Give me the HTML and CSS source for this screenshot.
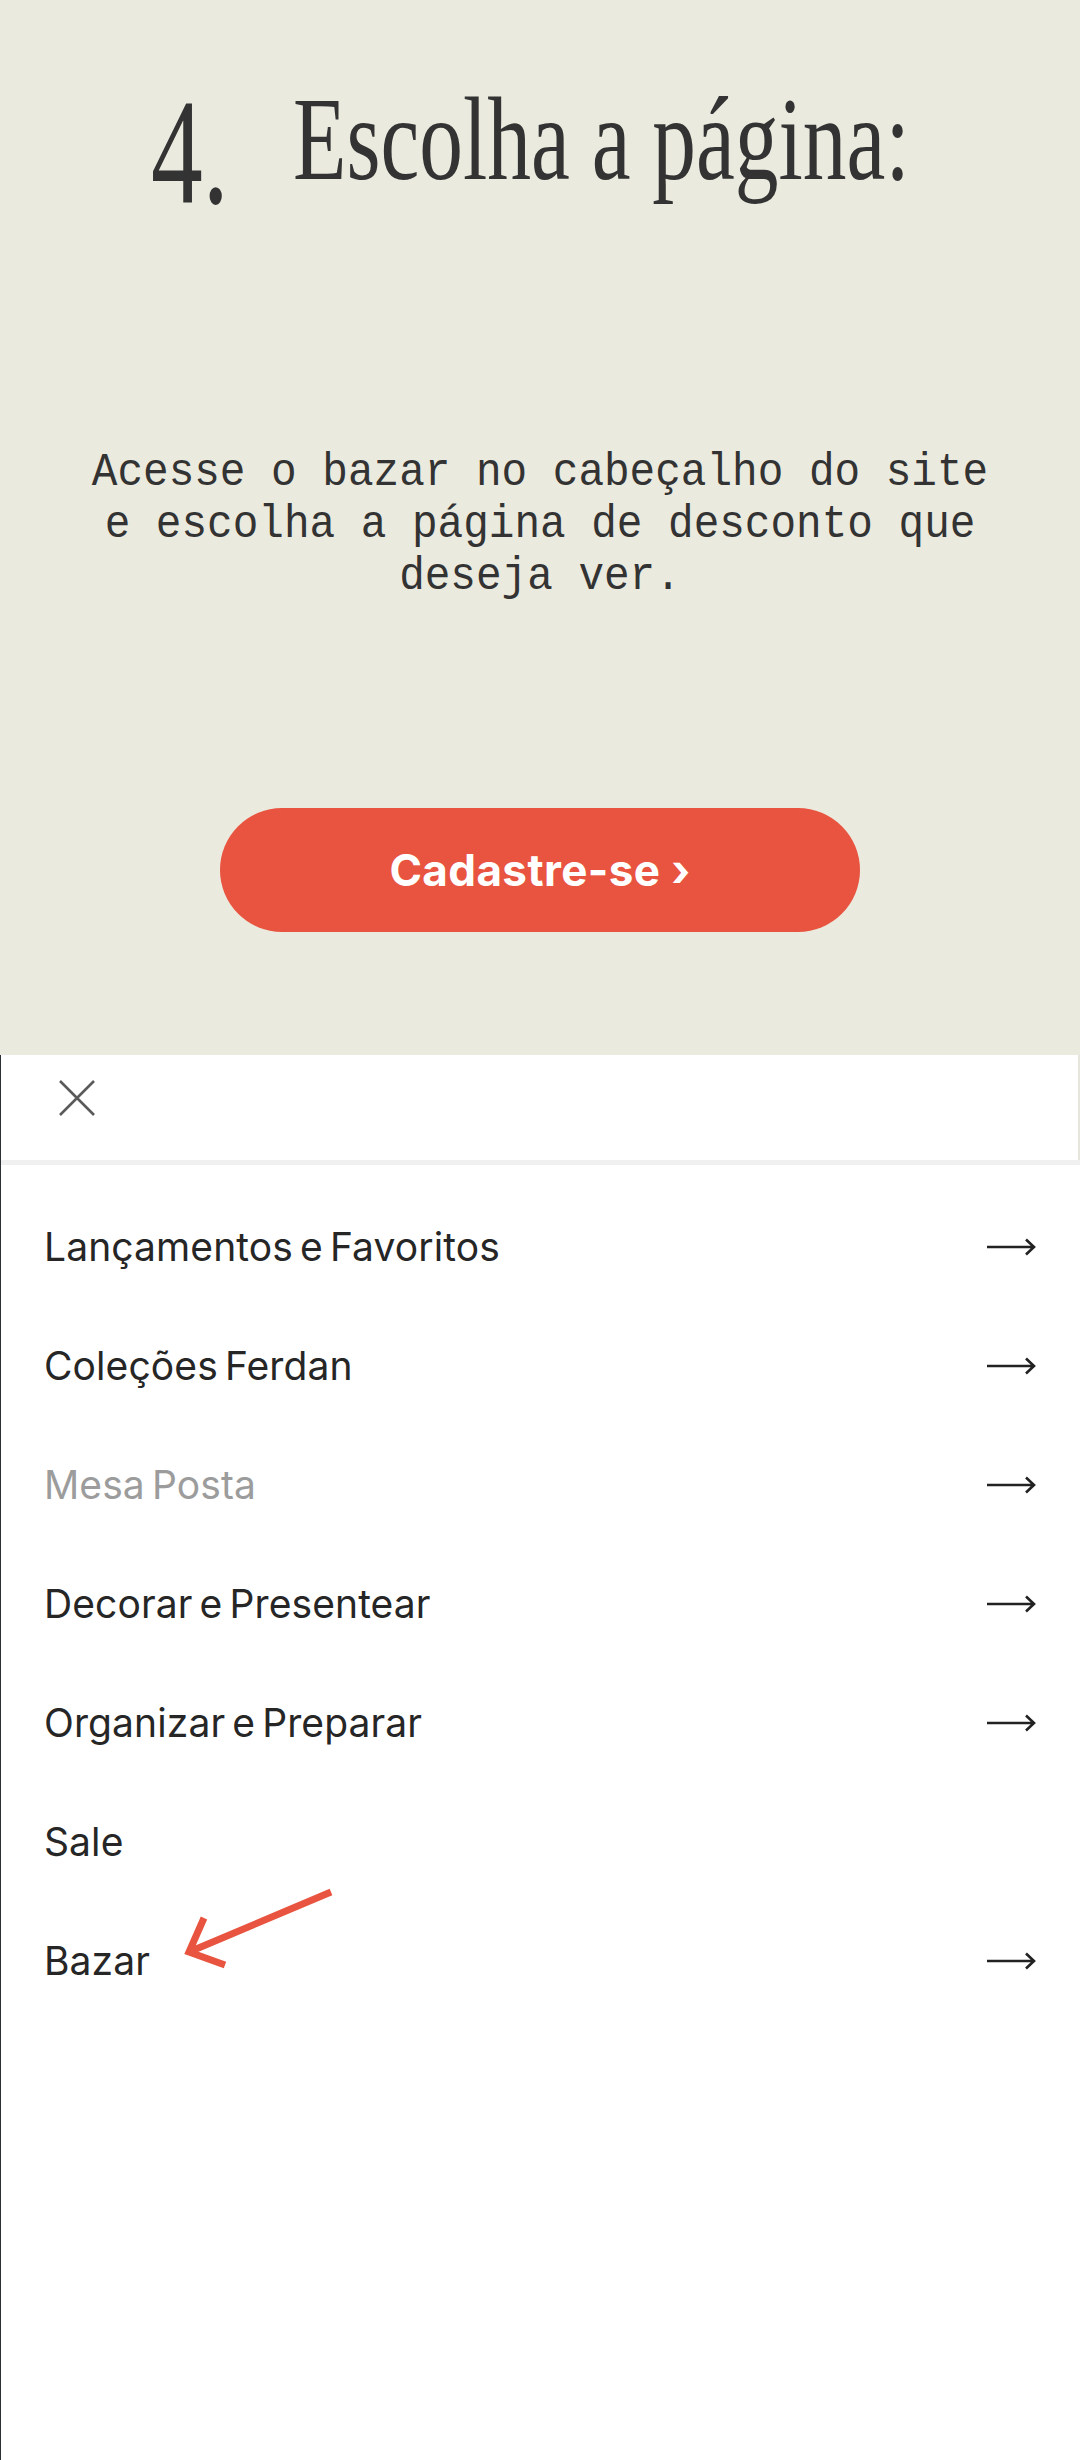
FILE: index.html
```html
<!DOCTYPE html>
<html lang="pt-BR">
<head>
<meta charset="utf-8">
<title>Escolha a página</title>
<link rel="stylesheet" href="styles.css">
</head>
<body>
<section class="step">
  <div class="step-head">
    <span class="step-num"><span class="step-num-in">4.</span></span>
    <h1 class="step-title"><span class="step-title-in">Escolha a página:</span></h1>
  </div>
  <p class="step-text">Acesse o bazar no cabeçalho do site<br>e escolha a página de desconto que<br>deseja ver.</p>
  <a class="cta" href="#">Cadastre-se ›</a>
</section>
<section class="menu">
  <div class="menu-head">
    <svg class="close" width="38" height="38" viewBox="0 0 38 38"><path d="M2 2 L36 36 M36 2 L2 36" stroke="#5a5a5a" stroke-width="2.6" fill="none"/></svg>
  </div>
  <ul class="menu-list">
    <li class="menu-item"><span>Lançamentos e Favoritos</span><svg class="go" width="50" height="20" viewBox="0 0 50 20"><path d="M1 10 H48 M40 2.5 L48 10 L40 17.5" stroke="#222" stroke-width="2.6" fill="none"/></svg></li>
    <li class="menu-item"><span>Coleções Ferdan</span><svg class="go" width="50" height="20" viewBox="0 0 50 20"><path d="M1 10 H48 M40 2.5 L48 10 L40 17.5" stroke="#222" stroke-width="2.6" fill="none"/></svg></li>
    <li class="menu-item menu-item--muted"><span>Mesa Posta</span><svg class="go" width="50" height="20" viewBox="0 0 50 20"><path d="M1 10 H48 M40 2.5 L48 10 L40 17.5" stroke="#222" stroke-width="2.6" fill="none"/></svg></li>
    <li class="menu-item"><span>Decorar e Presentear</span><svg class="go" width="50" height="20" viewBox="0 0 50 20"><path d="M1 10 H48 M40 2.5 L48 10 L40 17.5" stroke="#222" stroke-width="2.6" fill="none"/></svg></li>
    <li class="menu-item"><span>Organizar e Preparar</span><svg class="go" width="50" height="20" viewBox="0 0 50 20"><path d="M1 10 H48 M40 2.5 L48 10 L40 17.5" stroke="#222" stroke-width="2.6" fill="none"/></svg></li>
    <li class="menu-item"><span>Sale</span></li>
    <li class="menu-item"><span>Bazar</span><svg class="go" width="50" height="20" viewBox="0 0 50 20"><path d="M1 10 H48 M40 2.5 L48 10 L40 17.5" stroke="#222" stroke-width="2.6" fill="none"/></svg></li>
  </ul>
  <svg class="pointer" width="160" height="90" viewBox="0 0 160 90"><path d="M150 4 L8 64 M23 30 L8 64 L44 77" stroke="#e8543f" stroke-width="7" fill="none" stroke-linejoin="miter"/></svg>
</section>
</body>
</html>
```
FILE: styles.css
```css
* { box-sizing: border-box; }
html, body { margin: 0; padding: 0; }
body { width: 1080px; min-height: 2460px; background: #fff; }

.step {
  background: #ebeadf;
  height: 1055px;
  padding-top: 77px;
  display: flex;
  flex-direction: column;
  align-items: center;
  color: #333;
}
.step-head {
  width: 100%;
  display: flex;
  align-items: flex-start;
  padding-left: 151px;
  gap: 71px;
}
.step-num {
  width: 71px;
  font-family: "Liberation Serif", serif;
  font-size: 150px;
  line-height: 150px;
  white-space: nowrap;
}
.step-num-in { display: inline-block; transform: scaleX(0.69); transform-origin: left center; }
.step-title {
  margin: 4px 0 0;
  width: 612px;
  font-family: "Liberation Serif", serif;
  font-weight: normal;
  font-size: 118px;
  line-height: 118px;
  white-space: nowrap;
}
.step-title-in { display: inline-block; transform: scaleX(0.741); transform-origin: left center; }

.step-text {
  margin: 220px 0 0;
  width: 100%;
  font-family: "Liberation Mono", monospace;
  font-size: 47px;
  line-height: 52px;
  text-align: center;
  transform: scaleX(0.908);
  transform-origin: center;
}
.cta {
  margin-top: 205px;
  width: 640px;
  height: 124px;
  border-radius: 62px;
  background: #e8543f;
  color: #fff;
  text-decoration: none;
  display: flex;
  align-items: center;
  justify-content: center;
  font-family: Inter, "Liberation Sans", sans-serif;
  font-weight: 700;
  font-size: 44px;
  letter-spacing: 0.4px;
}

.menu {
  position: relative;
  background: #fff;
  border-left: 1px solid #2b3035;
  min-height: 1405px;
}
.menu-head {
  height: 105px;
  padding: 24px 0 0 57px;
  border-right: 2px solid #e6e6dc;
}
.close { display: block; }
.menu-list {
  list-style: none;
  margin: 0;
  padding: 22px 44px 0 43px;
  border-top: 5px solid #f0f0f0;
}
.menu-item {
  height: 119px;
  display: flex;
  align-items: center;
  justify-content: space-between;
  font-family: Inter, "Liberation Sans", sans-serif;
  font-size: 39px;
  letter-spacing: 0.1px;
  word-spacing: -4px;
  color: #262626;
}
.menu-item--muted { color: #9c9c9c; }
.go { display: block; flex: none; }
.pointer {
  position: absolute;
  left: 180px;
  top: 833px;
}
```
